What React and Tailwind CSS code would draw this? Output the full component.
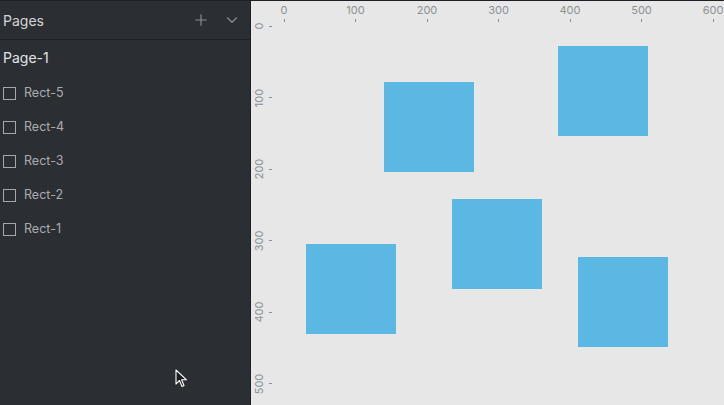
import { Plus, ChevronDown } from "lucide-react";

const layers = ["Rect-5", "Rect-4", "Rect-3", "Rect-2", "Rect-1"];

const rects = [
  { left: 133, top: 81 },
  { left: 307, top: 45 },
  { left: 201, top: 198 },
  { left: 55, top: 243 },
  { left: 327, top: 256 },
];

const xTicks = [0, 100, 200, 300, 400, 500, 600];
const yTicks = [0, 100, 200, 300, 400, 500];

export default function App() {
  return (
    <div
      className="flex h-[405px] w-[724px] overflow-hidden border-t border-[#1d2024] bg-[#2b2e33]"
      style={{ fontFamily: "Inter, 'Noto Sans', sans-serif" }}
    >
      {/* sidebar */}
      <div className="flex w-[251px] shrink-0 flex-col border-r border-[#1d2024] bg-[#2b2e33]">
        <div className="flex h-[39px] items-center justify-between border-b border-[#1d2024] pl-[3px] pr-[9px]">
          <span className="text-[14px] text-[#d4d6d8]">Pages</span>
          <div className="flex items-center gap-[13px] text-[#8c9095]">
            <Plus size={18} strokeWidth={1.5} />
            <ChevronDown size={18} strokeWidth={1.5} />
          </div>
        </div>
        <div className="flex h-[35px] items-center pl-[3px] text-[14px] text-[#e2e4e6]">Page-1</div>
        <div className="flex flex-col pt-[1px]">
          {layers.map((name) => (
            <div key={name} className="flex h-[34px] items-center gap-[8px] pl-[3px]">
              <div className="h-[13px] w-[13px] border border-[#a4a7ab]" />
              <span className="text-[12.5px] text-[#a9acaf]">{name}</span>
            </div>
          ))}
        </div>
        <div className="relative flex-1">
          <svg
            className="absolute left-[175px] top-[123px]"
            width="13"
            height="20"
            viewBox="0 0 13 20"
          >
            <path
              d="M1 1 L1 15 L4.5 11.5 L7 17.5 L9 16.5 L6.6 10.8 L11.5 10.8 Z"
              fill="#1c1e21"
              stroke="#ffffff"
              strokeWidth="1.1"
              strokeLinejoin="round"
            />
          </svg>
        </div>
      </div>

      {/* canvas */}
      <div className="relative flex-1 bg-[#e6e7e6] text-[11px] text-[#8d9094]">
        {xTicks.map((t, i) => (
          <div
            key={t}
            className="absolute top-[2px] flex w-[30px] -translate-x-1/2 flex-col items-center"
            style={{ left: 33 + i * 71.5 }}
          >
            <span className="leading-[14px]">{t}</span>
            <div className="mt-[2px] h-[3px] w-px bg-[#8d9094]" />
          </div>
        ))}
        {yTicks.map((t, i) => (
          <div
            key={t}
            className="absolute left-[2px] flex h-[30px] -translate-y-1/2 items-center gap-[4px]"
            style={{ top: 25 + i * 71.5 }}
          >
            <span className="inline-block w-[12px] leading-[12px]">
              <span className="block w-[30px] -translate-x-[9px] -rotate-90 text-center">{t}</span>
            </span>
            <div className="h-px w-[3px] bg-[#8d9094]" />
          </div>
        ))}
        {rects.map((r, i) => (
          <div
            key={i}
            className="absolute h-[90px] w-[90px] bg-[#5ab8e2]"
            style={{ left: r.left, top: r.top }}
          />
        ))}
      </div>
    </div>
  );
}
